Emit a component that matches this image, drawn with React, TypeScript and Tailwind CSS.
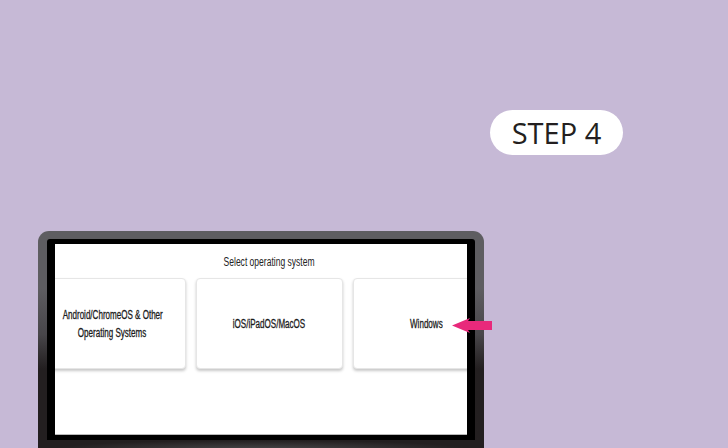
const OS_OPTIONS = [
  { id: 'android', label: ['Android/ChromeOS & Other', 'Operating Systems'] },
  { id: 'ios', label: ['iOS/iPadOS/MacOS'] },
  { id: 'windows', label: ['Windows'] },
];

// the screenshot uses a condensed face; none is installed, so squeeze Liberation Sans
const narrow = "font-['Liberation_Sans',Arial,sans-serif]";

function PinkArrow() {
  return (
    <svg width="40" height="15" viewBox="0 0 40 15" className="absolute left-[452px] top-[318px]">
      <polygon points="0,7.5 18,0 16,3 40,3 40,12 16,12 18,15" fill="#e8297b" />
    </svg>
  );
}

export default function App() {
  return (
    <main className="relative w-[728px] h-[448px] overflow-hidden bg-[#c6b9d6]">
      {/* pill */}
      <div className="flex pt-[110px] pl-[490px]">
        <div className="w-[133px] h-[45px] rounded-full bg-white flex items-center justify-center">
          <span className="font-['Open_Sans',sans-serif] text-[29px] leading-none text-[#231f20]">STEP 4</span>
        </div>
      </div>

      {/* monitor */}
      <div className="mt-[76px] ml-[38px] w-[446px] h-[230px] rounded-t-[11px] bg-linear-to-b from-[#5e5d61] from-25% via-[#48464a] via-45% to-[#231f20] to-60% pt-[8px] px-[9px]">
        <div className="bg-black rounded-t-[3px] pt-[5px] px-[8px] pb-[5px]">
          <div className={`h-[191px] bg-white overflow-hidden border-b border-[#b9b9b9] ${narrow}`}>
            <p className="pt-[11px] pl-[16px] text-center text-[12px] leading-[14px] text-[#222]">
              <span className="inline-block scale-x-[0.71]">Select operating system</span>
            </p>
            <div className="mt-[9px] -ml-[16px] flex gap-[10px]">
              {OS_OPTIONS.map((os) => (
                <div
                  key={os.id}
                  className="w-[147px] h-[91px] shrink-0 rounded-[4px] bg-white border border-[#e6e6e6] shadow-[0_2px_3px_rgba(0,0,0,0.22)] flex flex-col items-center justify-center text-[12px] leading-[18px] text-[#1a1a1a] text-center [-webkit-text-stroke:0.3px_#1a1a1a]"
                >
                  {os.label.map((l) => (
                    <span key={l} className="inline-block whitespace-nowrap scale-x-[0.67]">{l}</span>
                  ))}
                </div>
              ))}
            </div>
          </div>
        </div>
        <div className="h-[20px] bg-radial from-[#4a4a4c] to-[#231f20] to-70%" />
      </div>

      <PinkArrow />
    </main>
  );
}
